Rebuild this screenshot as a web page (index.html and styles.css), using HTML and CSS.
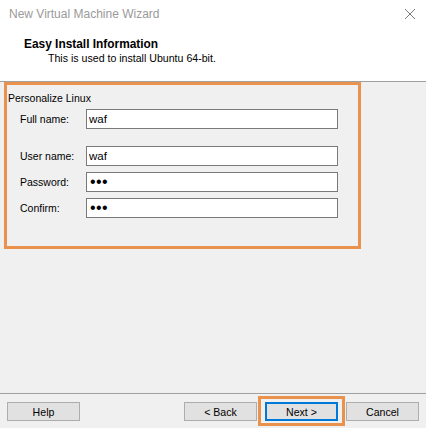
FILE: index.html
```html
<!DOCTYPE html>
<html>
<head>
<meta charset="utf-8">
<link rel="stylesheet" href="styles.css">
</head>
<body>
<div class="window">
  <div class="titlebar">
    <span class="title">New Virtual Machine Wizard</span>
    <svg class="close" width="12" height="12" viewBox="0 0 12 12"><path d="M1 1 L11 11 M11 1 L1 11" stroke="#7a7a7a" stroke-width="1" fill="none"/></svg>
  </div>
  <div class="header">
    <div class="h-title">Easy Install Information</div>
    <div class="h-sub">This is used to install Ubuntu 64-bit.</div>
  </div>
  <div class="body">
    <div class="group-label">Personalize Linux</div>
    <div class="form">
      <div class="row">
        <span class="label">Full name:</span>
        <input class="field" type="text" value="waf">
      </div>
      <div class="row row-gap">
        <span class="label">User name:</span>
        <input class="field" type="text" value="waf">
      </div>
      <div class="row">
        <span class="label">Password:</span>
        <input class="field pw" type="password" value="abc">
      </div>
      <div class="row">
        <span class="label">Confirm:</span>
        <input class="field pw" type="password" value="abc">
      </div>
    </div>
  </div>
  <div class="footer">
    <button class="btn">Help</button>
    <div class="spacer"></div>
    <button class="btn">&lt; Back</button>
    <button class="btn btn-default">Next &gt;</button>
    <button class="btn">Cancel</button>
  </div>
  <div class="mark mark-group"></div>
  <div class="mark mark-next"></div>
</div>
</body>
</html>
```
FILE: styles.css
```css
html, body {
  margin: 0;
  padding: 0;
}
body {
  width: 426px;
  height: 428px;
  overflow: hidden;
  font-family: "Liberation Sans", Arial, sans-serif;
  color: #000;
}
.window {
  position: relative;
  width: 426px;
  height: 428px;
  background: #f0f0f0;
  display: flex;
  flex-direction: column;
}
.titlebar {
  height: 29px;
  background: #fff;
  display: flex;
  align-items: center;
  padding: 0 10px 0 9px;
}
.title {
  flex: 1;
  font-size: 12px;
  color: #9a9a9a;
  margin-top: -1px;
}
.close {
  margin-top: -1px;
}
.header {
  height: 53px;
  background: #fff;
  border-bottom: 1px solid #a0a0a0;
  box-sizing: border-box;
  padding: 8px 0 0 24px;
}
.h-title {
  font-weight: bold;
  font-size: 11.9px;
  line-height: 14px;
}
.h-sub {
  font-size: 10.6px;
  line-height: 14px;
  padding-left: 24px;
}
.body {
  flex: 1;
  padding: 9px 0 0 8px;
}
.group-label {
  font-size: 10.5px;
  line-height: 14px;
}
.form {
  display: flex;
  flex-direction: column;
  gap: 6px;
  padding: 4px 0 0 12px;
}
.row {
  display: flex;
  align-items: center;
  height: 20px;
}
.row-gap {
  margin-top: 11px;
}
.label {
  width: 66px;
  font-size: 10.5px;
}
.field {
  width: 252px;
  height: 20px;
  box-sizing: border-box;
  border: 1px solid #7a7a7a;
  background: #fff;
  margin: 0;
  padding: 0 0 0 2px;
  font-family: "Liberation Sans", Arial, sans-serif;
  font-size: 11.5px;
  color: #000;
  outline: none;
}
.field.pw {
  font-size: 16px;
  letter-spacing: 0.4px;
  padding-left: 3px;
}
.footer {
  height: 35px;
  box-sizing: border-box;
  border-top: 1px solid #a0a0a0;
  display: flex;
  align-items: flex-start;
  padding: 8px 7px 0 7px;
  gap: 8px;
}
.spacer {
  flex: 1;
}
.btn {
  width: 73px;
  height: 19px;
  box-sizing: border-box;
  margin: 0;
  padding: 0;
  background: #e1e1e1;
  border: 1px solid #adadad;
  border-radius: 0;
  font-family: "Liberation Sans", Arial, sans-serif;
  font-size: 10.6px;
  color: #000;
}
.btn-default {
  border: 2px solid #0078d7;
}
.mark {
  position: absolute;
  box-sizing: border-box;
  border: 3px solid #e9924d;
}
.mark-group {
  left: 4px;
  top: 82px;
  width: 357px;
  height: 167px;
}
.mark-next {
  left: 258px;
  top: 396px;
  width: 87px;
  height: 30px;
}
```
